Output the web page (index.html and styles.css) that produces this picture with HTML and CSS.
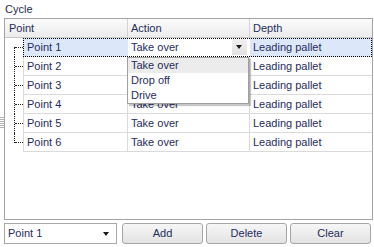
FILE: index.html
```html
<!DOCTYPE html>
<html>
<head>
<meta charset="utf-8">
<link rel="stylesheet" href="styles.css">
</head>
<body>
<div class="panel">
  <div class="grip"></div>
  <div class="caption">Cycle</div>
  <div class="grid">
    <div class="head">
      <div class="hc hc-point">Point</div>
      <div class="hc">Action</div>
      <div class="hc hc-last">Depth</div>
    </div>
    <div class="row sel">
      <div class="tree first"><span class="tv"></span><span class="th"></span></div>
      <div class="cell c-point">Point 1</div>
      <div class="cell editor">Take over<span class="ddbtn"><span class="tri"></span></span></div>
      <div class="cell c-last">Leading pallet</div>
      <div class="focus"></div>
    </div>
    <div class="row">
      <div class="tree"><span class="tv"></span><span class="th"></span></div>
      <div class="cell c-point">Point 2</div>
      <div class="cell">Take over</div>
      <div class="cell c-last">Leading pallet</div>
    </div>
    <div class="row">
      <div class="tree"><span class="tv"></span><span class="th"></span></div>
      <div class="cell c-point">Point 3</div>
      <div class="cell">Take over</div>
      <div class="cell c-last">Leading pallet</div>
    </div>
    <div class="row">
      <div class="tree"><span class="tv"></span><span class="th"></span></div>
      <div class="cell c-point">Point 4</div>
      <div class="cell">Take over</div>
      <div class="cell c-last">Leading pallet</div>
    </div>
    <div class="row">
      <div class="tree"><span class="tv"></span><span class="th"></span></div>
      <div class="cell c-point">Point 5</div>
      <div class="cell">Take over</div>
      <div class="cell c-last">Leading pallet</div>
    </div>
    <div class="row">
      <div class="tree last"><span class="tv"></span><span class="th"></span></div>
      <div class="cell c-point">Point 6</div>
      <div class="cell">Take over</div>
      <div class="cell c-last">Leading pallet</div>
    </div>
    <div class="popup">
      <div class="item hot">Take over</div>
      <div class="item">Drop off</div>
      <div class="item">Drive</div>
    </div>
  </div>
  <div class="bar">
    <div class="combo">Point 1<span class="tri"></span></div>
    <div class="btn">Add</div>
    <div class="btn">Delete</div>
    <div class="btn">Clear</div>
  </div>
</div>
</body>
</html>
```

FILE: styles.css
```css
* { box-sizing: border-box; }
html, body { margin: 0; padding: 0; background: #fff; }
body {
  font-family: "Liberation Sans", Arial, sans-serif;
  font-size: 11px;
  color: #1f2d5c;
  width: 374px;
  height: 247px;
  overflow: hidden;
}
.panel { position: relative; padding-left: 4px; width: 373px; }
.grip {
  position: absolute; left: 0; top: 117px; width: 4px; height: 11px;
  background: repeating-linear-gradient(to bottom, #b4b4b4 0 1px, transparent 1px 2px);
}
.caption { height: 18px; line-height: 16px; padding-left: 1px; padding-top: 1px; color: #1f2d4f; }
.grid {
  position: relative;
  width: 369px;
  height: 202px;
  border: 1px solid #a3a3a3;
  background: #fff;
}
.head {
  display: grid;
  grid-template-columns: 123px 122px 122px;
  height: 19px;
  border-bottom: 1px solid #c9c9c9;
  background: linear-gradient(#fbfbfb, #ececec);
}
.hc { line-height: 18px; padding-left: 3px; border-right: 1px solid #d3d3d3; }
.hc-point { padding-left: 4px; }
.hc-last { border-right: none; }
.row {
  position: relative;
  display: grid;
  grid-template-columns: 18px 105px 122px 122px;
  height: 19px;
}
.cell {
  line-height: 18px;
  padding-left: 3px;
  border-bottom: 1px solid #dadada;
  border-right: 1px solid #dadada;
  white-space: nowrap;
}
.c-point { border-left: 1px solid #dadada; }
.c-last { border-right: none; }
.tree { position: relative; }
.tv {
  position: absolute; left: 9px; top: 0; height: 19px; width: 0;
  border-left: 1px dotted #202020;
}
.first .tv { top: 9px; height: 10px; }
.last .tv { height: 10px; }
.th {
  position: absolute; left: 10px; top: 9px; width: 8px; height: 0;
  border-top: 1px dotted #202020;
}
.sel .cell { background: #dde7fa; border-color: transparent; }
.sel .editor { background: #fff; position: relative; }
.focus {
  position: absolute; left: 18px; right: 0; top: 0; height: 19px;
  border: 1px dotted #000;
  pointer-events: none;
}
.ddbtn {
  position: absolute; right: 2px; top: 1px; width: 15px; height: 16px;
  background: linear-gradient(#f0f0f0, #e2e2e2);
}
.tri {
  position: absolute; width: 0; height: 0;
  border-left: 3.5px solid transparent;
  border-right: 3.5px solid transparent;
  border-top: 4px solid #1a1a1a;
}
.ddbtn .tri { left: 4px; top: 6px; }
.popup {
  position: absolute; left: 122px; top: 38px; width: 122px; height: 47px;
  border: 1px solid #a0a0a0;
  background: #fff;
  box-shadow: 2px 2px 1px rgba(0,0,0,0.22);
  overflow: hidden;
  z-index: 2;
}
.item { height: 15px; line-height: 15px; padding-left: 3px; }
.item.hot { background: #ececec; }
.bar {
  display: grid;
  grid-template-columns: 115px 81px 81px 81px;
  column-gap: 3px;
  margin-top: 3px;
  width: 369px;
}
.combo {
  position: relative;
  height: 21px; line-height: 19px;
  border: 1px solid #a8a8a8;
  padding-left: 3px;
  margin-right: 2px;
  background: #fff;
}
.combo .tri { right: 7px; top: 8px; }
.btn {
  height: 21px; line-height: 19px;
  text-align: center;
  border: 1px solid #a6a6a6;
  border-radius: 3px;
  background: linear-gradient(#f6f6f6, #e3e3e3);
}
```
